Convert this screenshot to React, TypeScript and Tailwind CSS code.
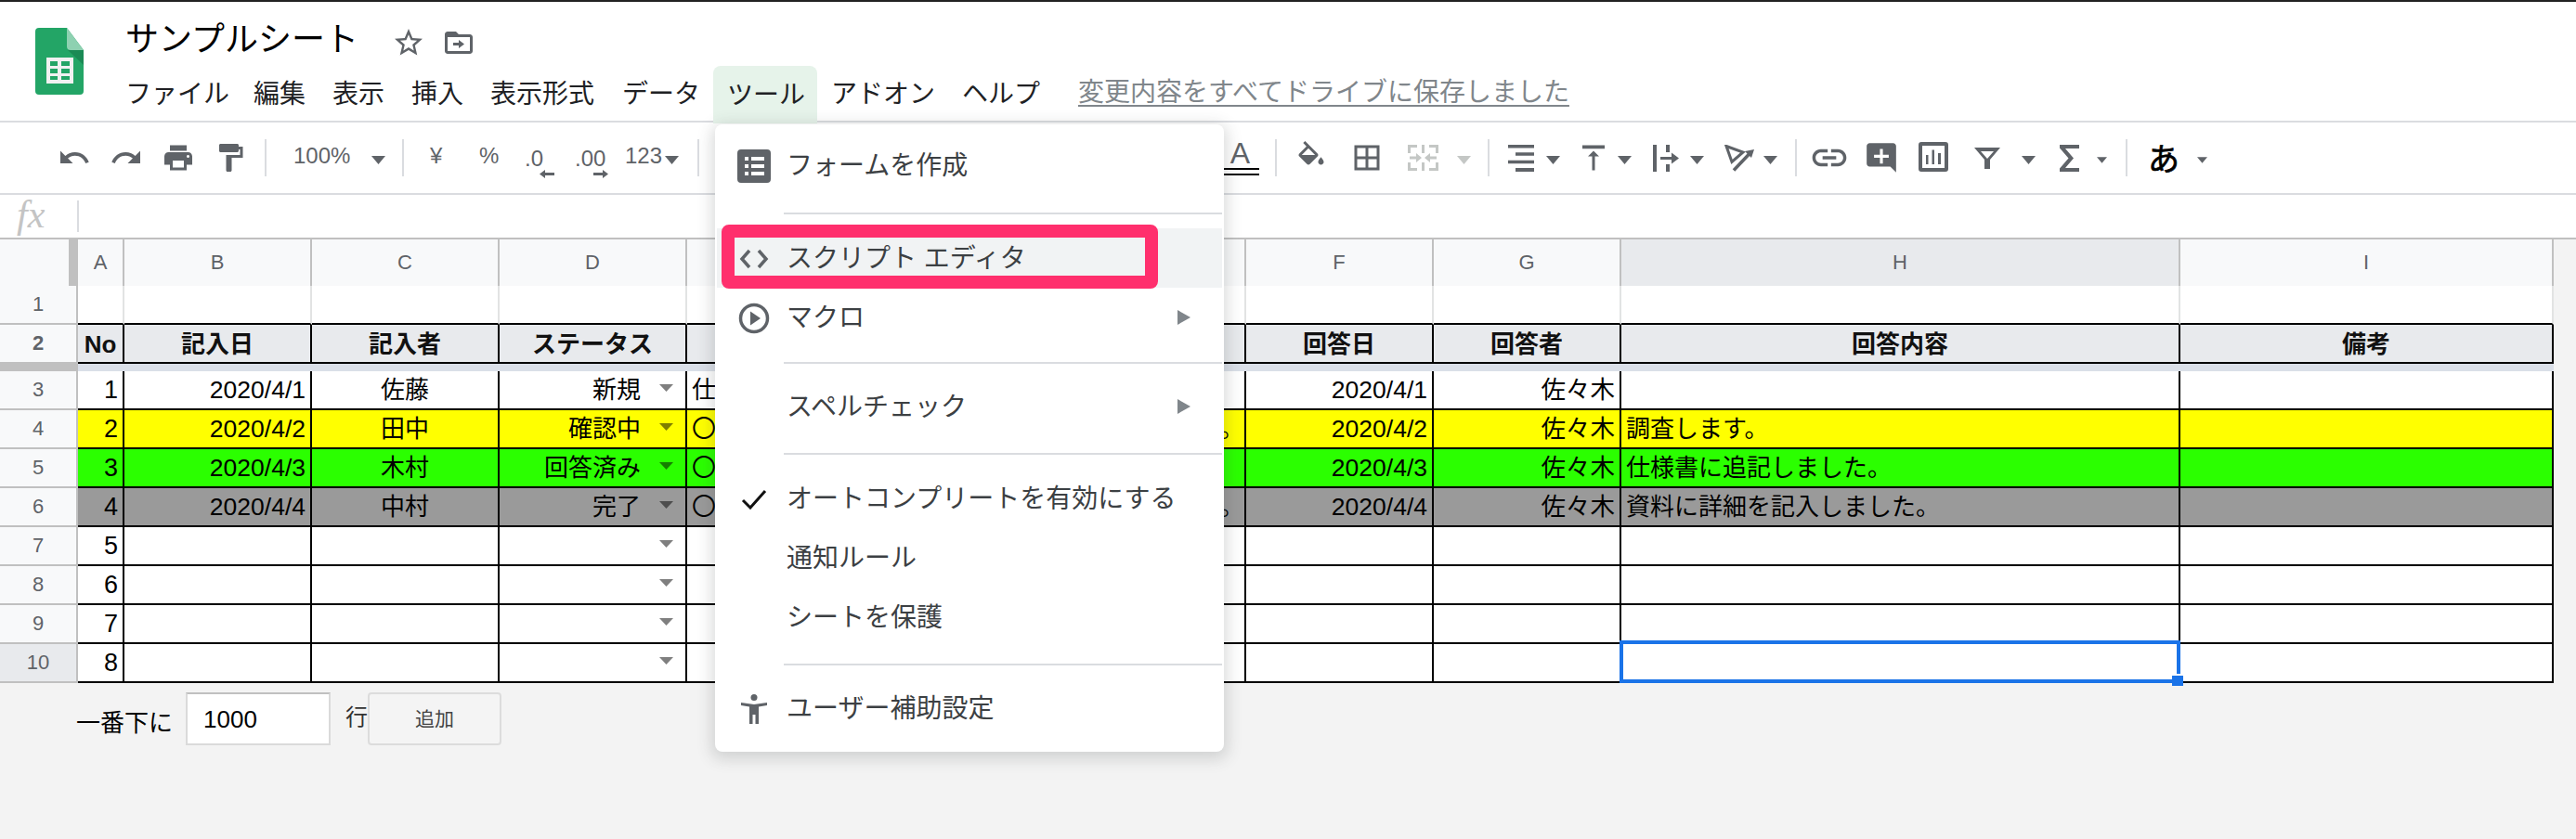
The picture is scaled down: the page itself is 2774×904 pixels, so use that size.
import React from "react";

const G = "#5f6368";

function Ic({ d, size = 36, fill = G, rule }: { d: string; size?: number; fill?: string; rule?: "evenodd" }) {
  return (
    <svg width={size} height={size} viewBox="0 0 24 24" className="shrink-0">
      <path d={d} fill={fill} fillRule={rule} />
    </svg>
  );
}

function Tri({ className = "", small = false, light = false }: { className?: string; small?: boolean; light?: boolean }) {
  return (
    <svg width={small ? 11 : 15} height={small ? 7 : 9} viewBox="0 0 15 9" className={"shrink-0 mt-[5px] " + className}>
      <path d="M0 0h15L7.500 9z" fill={light ? "#c4c7c5" : G} />
    </svg>
  );
}

function Sep({ className = "" }: { className?: string }) {
  return <div className={"w-[2px] h-[40px] bg-[#dadce0] shrink-0 " + className} />;
}

function Small({ className = "", children }: { className?: string; children: React.ReactNode }) {
  return <div className={"text-[24px] leading-none text-[#5f6368] shrink-0 -mt-[4px] whitespace-nowrap " + className}>{children}</div>;
}

function Toolbar() {
  return (
    <div className="h-[76px] flex items-center pl-[62px] bg-white">
      <Ic d="M12.5 8c-2.65 0-5.05.99-6.9 2.6L2 7v9h9l-3.62-3.62c1.39-1.16 3.16-1.88 5.12-1.88 3.54 0 6.55 2.31 7.6 5.5l2.37-.78C21.08 11.03 17.15 8 12.5 8z" />
      <div className="ml-[20px] flex"><Ic d="M18.4 10.6C16.55 8.99 14.15 8 11.5 8c-4.65 0-8.58 3.03-9.96 7.22L3.9 16c1.05-3.19 4.05-5.5 7.6-5.5 1.95 0 3.73.72 5.12 1.88L13 16h9V7l-3.6 3.6z" /></div>
      <div className="ml-[20px] flex"><Ic d="M19 8H5c-1.66 0-3 1.34-3 3v6h4v4h12v-4h4v-6c0-1.66-1.34-3-3-3zm-3 11H8v-5h8v5zm3-7c-.55 0-1-.45-1-1s.45-1 1-1 1 .45 1 1-.45 1-1 1zm-1-9H6v4h12V3z" /></div>
      <div className="ml-[20px] flex"><Ic d="M18 4V3c0-.55-.45-1-1-1H5c-.55 0-1 .45-1 1v4c0 .55.45 1 1 1h12c.55 0 1-.45 1-1V6h1v4H9v11c0 .55.45 1 1 1h2c.55 0 1-.45 1-1v-9h8V4h-3z" /></div>
      <Sep className="ml-[19px]" />
      <Small className="ml-[29px] w-[60px]">100%</Small>
      <Tri className="ml-[24px]" />
      <Sep className="ml-[18px]" />
      <Small className="ml-[28px] w-[14px]">¥</Small>
      <Small className="ml-[39px] w-[20px]">%</Small>
      <div className="ml-[29px] w-[32px] shrink-0 flex flex-col mt-[10px]">
        <span className="text-[24px] leading-none text-[#5f6368]">.0</span>
        <svg width="16" height="9" viewBox="0 0 16 9" className="self-end"><path d="M0 4.500L6 0v3h10v3H6v3z" fill={G} /></svg>
      </div>
      <div className="ml-[22px] w-[36px] shrink-0 flex flex-col mt-[10px]">
        <span className="text-[24px] leading-none text-[#5f6368]">.00</span>
        <svg width="16" height="9" viewBox="0 0 16 9" className="self-end"><path d="M16 4.500L10 0v3H0v3h10v3z" fill={G} /></svg>
      </div>
      <Small className="ml-[18px] w-[38px]">123</Small>
      <Tri className="ml-[5px]" />
      <Sep className="ml-[20px]" />
      <div className="ml-[565px] w-[38px] shrink-0 flex flex-col items-center">
        <span className="text-[32px] leading-[26px] text-[#5f6368] ml-[-3px]">A</span>
        <div className="w-full h-[8px] mt-[3px] border-y-2 border-black" />
      </div>
      <Sep className="ml-[17px]" />
      <div className="ml-[19px] flex"><Ic d="M16.56 8.940L7.620 0 6.210 1.410l2.380 2.380-5.150 5.150c-.59.59-.59 1.540 0 2.120l5.500 5.500c.29.29.68.44 1.060.44s.77-.15 1.060-.44l5.500-5.500c.59-.58.59-1.530 0-2.120zM5.210 10L10 5.210 14.790 10H5.210zM19 11.500s-2 2.170-2 3.500c0 1.100.9 2 2 2s2-.9 2-2c0-1.330-2-3.500-2-3.500z" /></div>
      <div className="ml-[24px] flex"><Ic d="M3 3v18h18V3H3zm8 16H5v-6h6v6zm0-8H5V5h6v6zm8 8h-6v-6h6v6zm0-8h-6V5h6v6z" /></div>
      <svg width="33" height="28" viewBox="0 0 33 28" className="ml-[26px] shrink-0" fill="#c4c7c5">
        <path d="M0 0h10v3H3v6H0zM23 0h10v9h-3V3h-7zM0 19h3v6h7v3H0zM30 19h3v9H23v-3h7zM15 0h3v9h-3zM15 19h3v9h-3zM2 12.500h7V9l6 5-6 5v-3.500H2zM31 12.500h-7V9l-6 5 6 5v-3.500h7z" />
      </svg>
      <Tri className="ml-[20px]" light />
      <Sep className="ml-[18px]" />
      <svg width="28" height="29" viewBox="0 0 28 29" className="ml-[20px] shrink-0" fill={G}>
        <path d="M0 0h28v3.500H0zM8 8.300h20v3.500H8zM0 16.800h28v3.500H0zM8 25h20v4H8z" />
      </svg>
      <Tri className="ml-[13px]" />
      <div className="ml-[18px] flex"><Ic d="M8 11h3v10h2V11h3l-4-4-4 4zM4 3v2.500h16V3H4z" /></div>
      <Tri className="ml-[8px]" />
      <svg width="28" height="29" viewBox="0 0 28 29" className="ml-[23px] shrink-0" fill={G}>
        <path d="M0 0h4v29H0zM14 0h4v8h-4zM14 21h4v8h-4zM8 13h12V8.500l8 6-8 6V16H8z" />
      </svg>
      <Tri className="ml-[12px]" />
      <svg width="32" height="29" viewBox="0 0 32 29" className="ml-[22px] shrink-0" fill="none" stroke={G}>
        <path d="M2 1.500L20 8 8 18.500z" strokeWidth="3" />
        <path d="M10 27.500L27 9.500" strokeWidth="3.500" />
        <path d="M32 5l-10 2 7 7z" fill={G} stroke="none" />
      </svg>
      <Tri className="ml-[10px]" />
      <Sep className="ml-[19px]" />
      <div className="ml-[13px] flex"><Ic size={44} d="M3.900 12c0-1.710 1.390-3.100 3.100-3.100h4V7H7c-2.760 0-5 2.240-5 5s2.240 5 5 5h4v-1.900H7c-1.710 0-3.100-1.390-3.100-3.100zM8 13h8v-2H8v2zm9-6h-4v1.900h4c1.710 0 3.100 1.390 3.100 3.100s-1.390 3.100-3.100 3.100h-4V17h4c2.760 0 5-2.240 5-5s-2.240-5-5-5z" /></div>
      <div className="ml-[15px] flex"><Ic size={38} d="M22 4c0-1.100-.9-2-2-2H4c-1.100 0-2 .9-2 2v12c0 1.100.9 2 2 2h14l4 4V4zm-5 8h-4v4h-2v-4H7v-2h4V6h2v4h4v2z" /></div>
      <svg width="32" height="32" viewBox="0 0 32 32" className="ml-[21px] shrink-0 -mt-[2px]">
        <path fillRule="evenodd" fill={G} d="M3 0h26a3 3 0 0 1 3 3v26a3 3 0 0 1-3 3H3a3 3 0 0 1-3-3V3a3 3 0 0 1 3-3zM4 4v24h24V4zM8 14h2.500v10H8zM14.500 8.500H17V24h-2.500zM21 12h3v12h-3z" />
      </svg>
      <svg width="28" height="23" viewBox="0 0 28 23" className="ml-[28px] shrink-0">
        <path fillRule="evenodd" fill={G} d="M0 0h28L17 13v10h-6V13zM7 4l7 8 7-8z" />
      </svg>
      <Tri className="ml-[23px]" />
      <svg width="21" height="29" viewBox="0 0 21 29" className="ml-[26px] shrink-0">
        <path fill={G} d="M0 0h21v4H6l9 10.500L6 25h15v4H0v-3.500L9.500 14.500 0 3.500z" />
      </svg>
      <Tri className="ml-[19px]" small />
      <Sep className="ml-[20px]" />
      <div className="ml-[22px] w-[34px] text-[34px] leading-none text-black shrink-0 mt-[4px] [-webkit-text-stroke:0.7px_black]">あ</div>
      <Tri className="ml-[19px]" small />
    </div>
  );
}

function Header() {
  return (
    <div className="h-[128px] bg-white flex">
      <svg width="52" height="72" viewBox="0 0 52 72" className="ml-[38px] mt-[28px] shrink-0">
        <path d="M4 0h30l18 24v44a4 4 0 0 1-4 4H4a4 4 0 0 1-4-4V4a4 4 0 0 1 4-4z" fill="#23a566" />
        <path d="M34 0l18 24H38a4 4 0 0 1-4-4z" fill="#8ed1b1" />
        <path d="M35 24l17 16V24z" fill="#1b8a55" />
        <path fillRule="evenodd" d="M12 32h29v28H12zM16 36v5h8v-5zM28 36v5h9v-5zM16 44v5h8v-5zM28 44v5h9v-5zM16 52v4h8v-4zM28 52v4h9v-4z" fill="#f1f1f1" />
      </svg>
      <div className="ml-[45px] flex flex-col">
        <div className="h-[70px] flex items-center pt-[14px]">
          <span className="text-[36px] leading-none text-black w-[287px] shrink-0 whitespace-nowrap">サンプルシート</span>
          <div className="flex mt-[6px]">
            <Ic d="M22 9.240l-7.190-.62L12 2 9.190 8.630 2 9.240l5.460 4.730L5.820 21 12 17.270 18.180 21l-1.630-7.030L22 9.240zM12 15.400l-3.760 2.270 1-4.280-3.320-2.880 4.380-.38L12 6.100l1.710 4.040 4.380.38-3.320 2.880 1 4.280L12 15.400z" />
          </div>
          <div className="ml-[18px] flex mt-[6px]">
            <Ic d="M20 6h-8l-2-2H4c-1.100 0-2 .9-2 2v12c0 1.100.9 2 2 2h16c1.100 0 2-.9 2-2V8c0-1.100-.9-2-2-2zm0 12H4V8h16v10zM12 16l4-3-4-3v2H8v2h4v2z" />
          </div>
        </div>
        <div className="h-[60px] flex items-center text-[28px] leading-none text-[#202124] whitespace-nowrap">
          <span className="w-[138px] pt-[4px]">ファイル</span>
          <span className="w-[85px] pt-[4px]">編集</span>
          <span className="w-[85px] pt-[4px]">表示</span>
          <span className="w-[85px] pt-[4px]">挿入</span>
          <span className="w-[142px] pt-[4px]">表示形式</span>
          <span className="w-[98px] pt-[4px]">データ</span>
          <span className="w-[112px] h-[62px] -mb-[2px] mt-[2px] pl-[15px] pt-[2px] flex items-center bg-[#e6f3ea] rounded-t-[8px]">ツール</span>
          <span className="w-[156px] pl-[15px] pt-[4px]">アドオン</span>
          <span className="w-[125px] pt-[4px]">ヘルプ</span>
          <span className="text-[#80868b] underline underline-offset-[4px]">変更内容をすべてドライブに保存しました</span>
        </div>
      </div>
    </div>
  );
}

const cols = "grid grid-cols-[84px_50px_202px_202px_202px_602px_202px_202px_602px_402px] w-[2750px]";
const letters = ["A", "B", "C", "D", "E", "F", "G", "H", "I"];

function ColHead() {
  return (
    <div className={cols + " h-[50px]"}>
      <div className="bg-[#f8f9fa] border-b-2 border-[#c0c0c0] flex justify-end">
        <div className="w-[10px] h-[50px] bg-[#c0c0c0]" />
      </div>
      {letters.map((l) => (
        <div
          key={l}
          className={
            "border-b-2 border-r-2 border-[#c0c0c0] flex items-center justify-center text-[22px] leading-none text-[#5f6368] " +
            (l === "H" ? "bg-[#e8eaed]" : "bg-[#f8f9fa]")
          }
        >
          {l}
        </div>
      ))}
    </div>
  );
}

function RowNum({ n, active = false }: { n: number; active?: boolean }) {
  return (
    <div
      className={
        "border-r-2 border-b-2 border-[#c0c0c0] flex items-center justify-center text-[22px] leading-none text-[#5f6368] " +
        (active ? "bg-[#e8eaed]" : "bg-[#f8f9fa]")
      }
    >
      {n}
    </div>
  );
}

function Arrow() {
  return (
    <svg width="15" height="8" viewBox="0 0 15 8" className="shrink-0 -mt-[4px]">
      <path d="M0 0h15L7.500 8z" fill="#000" fillOpacity="0.5" />
    </svg>
  );
}

type Row = { n: number; bg: string; no: number; d?: string; who?: string; st?: string; e?: string; f?: string; g?: string; h?: string };

const rows: Row[] = [
  { n: 3, bg: "bg-white", no: 1, d: "2020/4/1", who: "佐藤", st: "新規", e: "仕様について", f: "2020/4/1", g: "佐々木" },
  { n: 4, bg: "bg-[#ffff00]", no: 2, d: "2020/4/2", who: "田中", st: "確認中", e: "〇〇画面の仕様についてのご確認をお願いします。", f: "2020/4/2", g: "佐々木", h: "調査します。" },
  { n: 5, bg: "bg-[#2bff00]", no: 3, d: "2020/4/3", who: "木村", st: "回答済み", e: "〇〇画面の仕様について", f: "2020/4/3", g: "佐々木", h: "仕様書に追記しました。" },
  { n: 6, bg: "bg-[#9a9a9a]", no: 4, d: "2020/4/4", who: "中村", st: "完了", e: "〇〇画面の仕様についてのご確認をお願いします。", f: "2020/4/4", g: "佐々木", h: "資料に詳細を記入しました。" },
  { n: 7, bg: "bg-white", no: 5 },
  { n: 8, bg: "bg-white", no: 6 },
  { n: 9, bg: "bg-white", no: 7 },
  { n: 10, bg: "bg-white", no: 8 },
];

const cell = "border-r-2 border-b-2 border-black flex items-center px-[5px] whitespace-nowrap overflow-hidden min-w-0";

function Sheet() {
  return (
    <div className="relative w-[2750px]">
      <ColHead />
      <div className={cols + " h-[42px]"}>
        <RowNum n={1} />
        {letters.map((l) => (
          <div key={l} className="bg-white border-r-2 border-[#e2e3e3] border-b-2 border-b-black" />
        ))}
      </div>
      <div className={cols + " h-[42px] text-[26px] leading-none font-bold text-[#111]"}>
        <RowNum n={2} />
        {["No", "記入日", "記入者", "ステータス", "", "回答日", "回答者", "回答内容", "備考"].map((t, i) => (
          <div key={i} className="bg-[#e8eaed] border-r-2 border-b-2 border-black flex items-center justify-center pt-[2px]">
            {t}
          </div>
        ))}
      </div>
      <div className={cols + " h-[8px]"}>
        <div className="bg-[#c0c0c0]" />
        <div className="col-span-9 bg-[#dadfe8]" />
      </div>
      {rows.map((r) => (
        <div key={r.n} className={cols + " h-[42px] text-[26px] leading-none text-black"}>
          <RowNum n={r.n} active={r.n === 10} />
          <div className={cell + " justify-end text-[27px] " + r.bg}>{r.no}</div>
          <div className={cell + " justify-end text-[26.500px] " + r.bg}>{r.d}</div>
          <div className={cell + " justify-center " + r.bg}>{r.who}</div>
          <div className={cell + " justify-end pr-[13px] gap-[20px] " + r.bg}>
            <span>{r.st}</span>
            <Arrow />
          </div>
          <div className={cell + " " + r.bg}>{r.e}</div>
          <div className={cell + " justify-end text-[26.500px] " + r.bg}>{r.f}</div>
          <div className={cell + " justify-end text-[26.500px] " + r.bg}>{r.g}</div>
          <div className={cell + " " + r.bg}>{r.h}</div>
          <div className={cell + " " + r.bg} />
        </div>
      ))}
      <div className="absolute left-[1744px] top-[432px] w-[604px] h-[46px] border-[4px] border-[#1a73e8]" />
      <div className="absolute left-[2339px] top-[468px] w-[12px] h-[13px] bg-[#1a73e8] border-t-2 border-white" />
    </div>
  );
}

function Footer() {
  return (
    <div className="flex items-start pl-[82px] pt-[10px]">
      <span className="text-[26px] leading-none text-black mt-[20px] w-[118px] shrink-0 whitespace-nowrap">一番下に</span>
      <div className="w-[156px] h-[57px] bg-white border-2 border-[#dadada] border-t-[#c0c0c0] flex items-center pl-[17px] text-[26px] leading-none text-black">
        1000
      </div>
      <span className="ml-[16px] w-[24px] text-[24px] leading-none text-[#333] mt-[15px]">行</span>
      <div className="w-[144px] h-[57px] rounded-[4px] border-2 border-[#dcdcdc] bg-[#f4f4f4] flex items-center justify-center text-[21px] leading-none text-[#444]">
        追加
      </div>
    </div>
  );
}

function MenuItem({ icon, label, arrow = false, hover = false }: { icon?: React.ReactNode; label: string; arrow?: boolean; hover?: boolean }) {
  return (
    <div className={"h-[64px] flex items-center pr-[34px] mx-[2px] " + (hover ? "bg-[#f1f3f4]" : "")}>
      <div className="w-[75px] shrink-0 flex justify-center pl-[4px] pt-[2px]">{icon}</div>
      <span className="flex-1 text-[28px] leading-none text-[#3c4043] whitespace-nowrap pt-[2px]">{label}</span>
      {arrow && (
        <svg width="14" height="16" viewBox="0 0 14 16" className="shrink-0">
          <path d="M0 0l14 8-14 8z" fill="#80868b" />
        </svg>
      )}
    </div>
  );
}

function Divider({ className }: { className: string }) {
  return <div className={"ml-[74px] mr-[2px] h-[2px] bg-[#dadce0] " + className} />;
}

function Menu() {
  return (
    <div className="absolute left-[770px] top-[134px] w-[548px] h-[676px] bg-white rounded-[8px] pt-[12px] shadow-[0_4px_16px_4px_rgba(60,64,67,0.18)]">
      <MenuItem
        label="フォームを作成"
        icon={
          <svg width="36" height="36" viewBox="0 0 36 36">
            <path fillRule="evenodd" d="M4 0h28a4 4 0 0 1 4 4v28a4 4 0 0 1-4 4H4a4 4 0 0 1-4-4V4a4 4 0 0 1 4-4zM8 8v4h4V8zM15 8v4h14V8zM8 16v4h4v-4zM15 16v4h14v-4zM8 24v4h4v-4zM15 24v4h14v-4z" fill={G} />
          </svg>
        }
      />
      <Divider className="mt-[19px] mb-[15px]" />
      <MenuItem
        hover
        label="スクリプト エディタ"
        icon={
          <svg width="32" height="22" viewBox="0 0 32 22" fill="none" stroke={G} strokeWidth="3.500">
            <path d="M11 2L3 11l8 9M21 2l8 9-8 9" />
          </svg>
        }
      />
      <MenuItem
        arrow
        label="マクロ"
        icon={
          <svg width="34" height="34" viewBox="0 0 34 34">
            <circle cx="17" cy="17" r="14.500" fill="none" stroke={G} strokeWidth="3.500" />
            <path d="M13 9.500L24 17l-11 7.500z" fill={G} />
          </svg>
        }
      />
      <Divider className="mt-[16px] mb-[14px]" />
      <MenuItem arrow label="スペルチェック" />
      <Divider className="mt-[18px] mb-[15px]" />
      <MenuItem
        label="オートコンプリートを有効にする"
        icon={
          <svg width="28" height="22" viewBox="0 0 28 22" fill="none" stroke="#111" strokeWidth="3">
            <path d="M2 12l8 8L26 2" />
          </svg>
        }
      />
      <MenuItem label="通知ルール" />
      <MenuItem label="シートを保護" />
      <Divider className="mt-[18px] mb-[14px]" />
      <MenuItem
        label="ユーザー補助設定"
        icon={
          <svg width="28" height="32" viewBox="0 0 28 32">
            <circle cx="14" cy="3.500" r="3.500" fill={G} />
            <path d="M0 9l14 2 14-2v3l-9 1.500V32h-3.500V22h-3v10H9V13.500L0 12z" fill={G} />
          </svg>
        }
      />
      <div className="absolute left-[7px] top-[108px] w-[470px] h-[69px] rounded-[8px] border-[14px] border-[#ff2f6d]" />
    </div>
  );
}

export default function App() {
  return (
    <div
      className="relative w-[2774px] h-[904px] overflow-hidden bg-[#f3f3f3]"
      style={{ fontFamily: '"Liberation Sans", "Noto Sans CJK JP", sans-serif' }}
    >
      <div className="h-[2px] bg-[#222222]" />
      <Header />
      <div className="h-[2px] bg-[#dadce0]" />
      <Toolbar />
      <div className="h-[2px] bg-[#dadce0]" />
      <div className="h-[46px] bg-white flex items-center">
        <span className="w-[83px] shrink-0 pl-[18px] pb-[4px] text-[42px] leading-none italic text-[#c4c4c4]" style={{ fontFamily: '"Liberation Serif", serif' }}>
          fx
        </span>
        <div className="w-[2px] h-[34px] bg-[#dadce0]" />
      </div>
      <div className="h-[2px] bg-[#c0c0c0]" />
      <Sheet />
      <Footer />
      <Menu />
    </div>
  );
}
